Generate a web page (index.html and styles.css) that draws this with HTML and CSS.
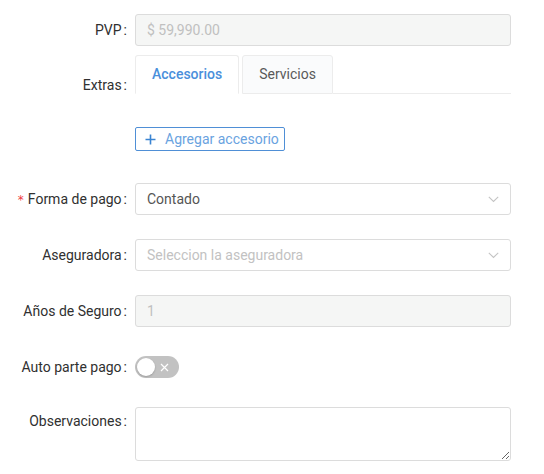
FILE: index.html
```html
<!DOCTYPE html>
<html lang="es">
<head>
<meta charset="utf-8">
<link rel="stylesheet" href="styles.css">
</head>
<body>
<form class="form">
  <div class="row row-pvp">
    <div class="label">PVP<span class="colon">:</span></div>
    <div class="control">
      <div class="field disabled">$ 59,990.00</div>
    </div>
  </div>

  <div class="row row-extras">
    <div class="label label-extras">Extras<span class="colon">:</span></div>
    <div class="control">
      <div class="tabs">
        <div class="tab active">Accesorios</div>
        <div class="tab">Servicios</div>
        <div class="tab-fill"></div>
      </div>
      <div class="pane">
        <button type="button" class="add-btn">
          <svg class="plus" width="11" height="11" viewBox="0 0 11 11"><path d="M5.5 0.5v10M0.5 5.5h10" stroke="#3a84d2" stroke-width="1.6" fill="none"/></svg>
          <span>Agregar accesorio</span>
        </button>
      </div>
    </div>
  </div>

  <div class="row row-gap-lg">
    <div class="label"><span class="req">*</span>Forma de pago<span class="colon">:</span></div>
    <div class="control">
      <div class="field select"><span>Contado</span>
        <svg class="arrow" width="11" height="7" viewBox="0 0 11 7"><path d="M0.8 0.8l4.7 4.7 4.7-4.7" stroke="#c4c4c4" stroke-width="1.1" fill="none"/></svg>
      </div>
    </div>
  </div>

  <div class="row row-gap">
    <div class="label">Aseguradora<span class="colon">:</span></div>
    <div class="control">
      <div class="field select placeholder"><span>Seleccion la aseguradora</span>
        <svg class="arrow" width="11" height="7" viewBox="0 0 11 7"><path d="M0.8 0.8l4.7 4.7 4.7-4.7" stroke="#c4c4c4" stroke-width="1.1" fill="none"/></svg>
      </div>
    </div>
  </div>

  <div class="row row-gap">
    <div class="label">Años de Seguro<span class="colon">:</span></div>
    <div class="control">
      <div class="field disabled">1</div>
    </div>
  </div>

  <div class="row row-switch">
    <div class="label label-switch">Auto parte pago<span class="colon">:</span></div>
    <div class="control">
      <div class="switch">
        <span class="knob"></span>
        <svg class="x" width="9" height="9" viewBox="0 0 9 9"><path d="M1 1l7 7M8 1l-7 7" stroke="#fff" stroke-width="1.2" fill="none"/></svg>
      </div>
    </div>
  </div>

  <div class="row row-obs">
    <div class="label label-obs">Observaciones<span class="colon">:</span></div>
    <div class="control">
      <textarea class="textarea"></textarea>
    </div>
  </div>
</form>
</body>
</html>
```

FILE: styles.css
```css
* { box-sizing: border-box; }

html, body {
  margin: 0;
  padding: 0;
  background: #fff;
}

body {
  font-family: Roboto, "Noto Sans", Arial, sans-serif;
  font-size: 14px;
  color: #333;
}

.form {
  width: 544px;
  padding-top: 14px;
}

.row {
  display: flex;
  align-items: flex-start;
}

.label {
  width: 127px;
  flex: none;
  margin-right: 8px;
  text-align: right;
  line-height: 32px;
  height: 32px;
  color: #303030;
  white-space: nowrap;
}

.colon {
  margin-left: 2px;
}

.req {
  color: #f0393f;
  margin-right: 4px;
  font-family: SimSun, "DejaVu Sans", sans-serif;
  font-size: 12px;
}

.control {
  width: 376px;
  flex: none;
}

.field {
  height: 32px;
  border: 1px solid #dcdcdc;
  border-radius: 3px;
  padding: 0 11px;
  line-height: 30px;
  color: #555;
  background: #fff;
  display: flex;
  align-items: center;
}

.field.disabled {
  background: #f5f6f5;
  color: #c0c0c0;
}

.field.select {
  justify-content: space-between;
}

.field.placeholder span {
  color: #c2c2c2;
}

/* Extras row */
.row-extras {
  margin-top: 9px;
}

.label-extras {
  padding-top: 20px;
  line-height: 20px;
  height: auto;
}

.tabs {
  display: flex;
  height: 39px;
}

.tab {
  height: 39px;
  padding: 0 16px;
  line-height: 37px;
  border: 1px solid #ececec;
  border-radius: 3px 3px 0 0;
  background: #fafbfc;
  color: #595959;
  margin-right: 3px;
}

.tab.active {
  background: #fff;
  color: #4a8fdb;
  font-weight: 500;
  border-bottom-color: #fff;
}

.tab-fill {
  flex: 1;
  border-bottom: 1px solid #ececec;
  margin-left: -3px;
}

.pane {
  padding-top: 33px;
}

.add-btn {
  display: flex;
  align-items: center;
  height: 24px;
  width: 150px;
  padding: 0 0 0 9px;
  border: 1px solid #4f8fd6;
  border-radius: 2px;
  background: #fff;
  font-family: inherit;
  font-size: 14px;
  color: #6aa3df;
  cursor: pointer;
}

.add-btn .plus {
  margin-right: 9px;
}

.row-gap-lg {
  margin-top: 32px;
}

.row-gap {
  margin-top: 24px;
}

/* switch row */
.row-switch {
  margin-top: 29px;
  align-items: center;
}

.label-switch {
  line-height: 22px;
  height: 22px;
}

.switch {
  position: relative;
  width: 44px;
  height: 22px;
  border-radius: 11px;
  background: #c2c2c2;
  display: flex;
  align-items: center;
  justify-content: flex-end;
  padding-right: 10px;
}

.knob {
  position: absolute;
  left: 2px;
  top: 2px;
  width: 18px;
  height: 18px;
  border-radius: 50%;
  background: #fff;
  box-shadow: 0 1px 2px rgba(0, 0, 0, 0.2);
}

/* observations */
.row-obs {
  margin-top: 29px;
}

.label-obs {
  line-height: 28px;
}

.textarea {
  display: block;
  width: 376px;
  height: 54px;
  border: 1px solid #dcdcdc;
  border-radius: 3px;
  padding: 4px 11px;
  font-family: inherit;
  font-size: 14px;
  resize: vertical;
  outline: none;
}
```
